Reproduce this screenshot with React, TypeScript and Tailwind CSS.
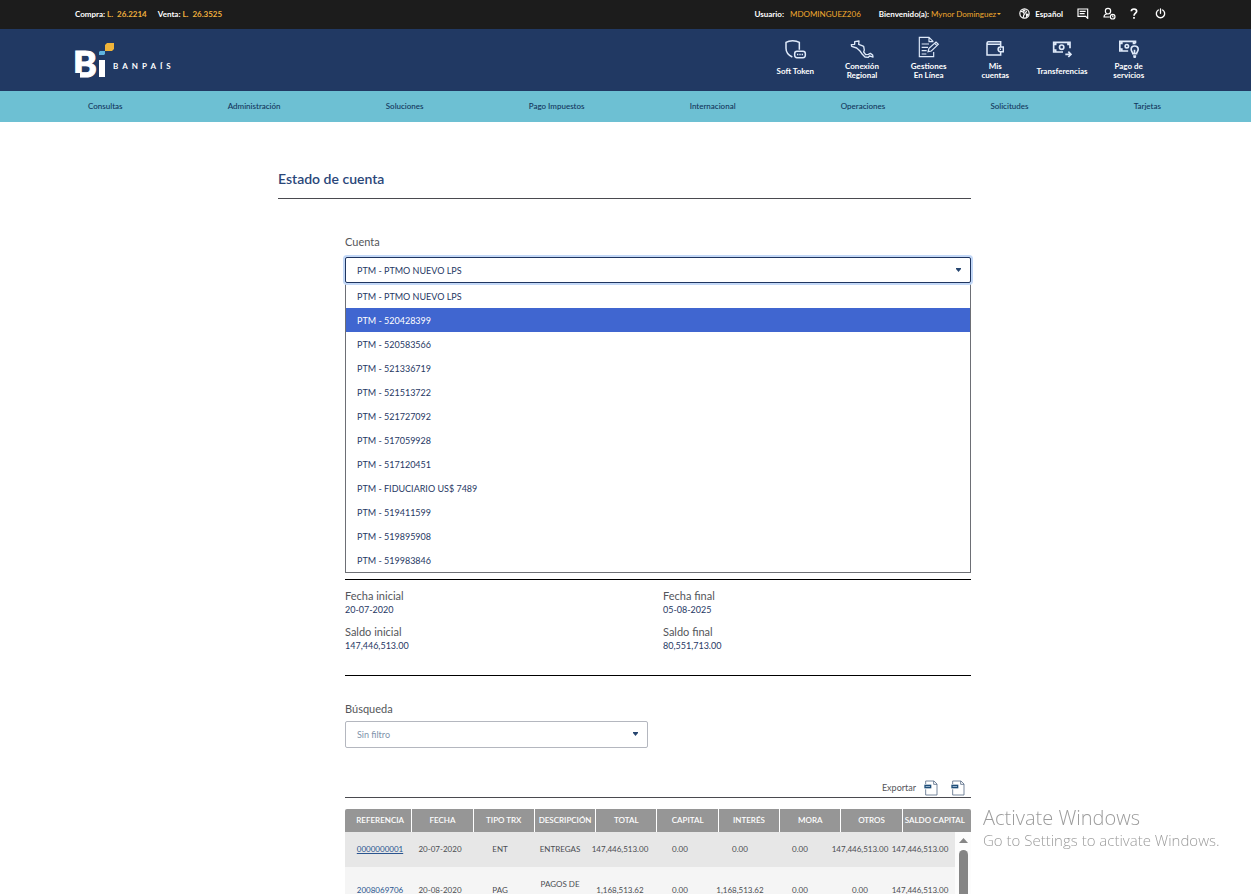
import { useState, type ReactNode } from "react";

const accounts = [
  "PTM - PTMO NUEVO LPS",
  "PTM - 520428399",
  "PTM - 520583566",
  "PTM - 521336719",
  "PTM - 521513722",
  "PTM - 521727092",
  "PTM - 517059928",
  "PTM - 517120451",
  "PTM - FIDUCIARIO US$ 7489",
  "PTM - 519411599",
  "PTM - 519895908",
  "PTM - 519983846",
];

const menu = [
  "Consultas",
  "Administración",
  "Soluciones",
  "Pago Impuestos",
  "Internacional",
  "Operaciones",
  "Solicitudes",
  "Tarjetas",
];

const summary = [
  { label: "Fecha inicial", value: "20-07-2020" },
  { label: "Fecha final", value: "05-08-2025" },
  { label: "Saldo inicial", value: "147,446,513.00" },
  { label: "Saldo final", value: "80,551,713.00" },
];

const columns = [
  "REFERENCIA",
  "FECHA",
  "TIPO TRX",
  "DESCRIPCIÓN",
  "TOTAL",
  "CAPITAL",
  "INTERÉS",
  "MORA",
  "OTROS",
  "SALDO CAPITAL",
];

const rows = [
  ["0000000001", "20-07-2020", "ENT", "ENTREGAS", "147,446,513.00", "0.00", "0.00", "0.00", "147,446,513.00", "147,446,513.00"],
  ["2008069706", "20-08-2020", "PAG", "PAGOS DE", "1,168,513.62", "0.00", "1,168,513.62", "0.00", "0.00", "147,446,513.00"],
];

const fieldLabel = "block text-[11px] leading-4 text-[#54565a]";

export default function App() {
  return (
    <div className="h-screen overflow-hidden bg-white font-['Lato',sans-serif] text-[#1f3864]">
      <TopBar />
      <Header />
      <nav className="bg-[#6dc0d3]">
        <ul className="mx-auto flex h-[31px] max-w-[1101px] items-center justify-between pb-px pl-[13px] pr-[15px] text-[8px] font-medium text-[#12355b]">
          {menu.map((item) => (
            <li key={item}>
              <a href="#">{item}</a>
            </li>
          ))}
        </ul>
      </nav>
      <main className="mx-auto max-w-[695px] pr-[2px] pt-[47px]">
        <h1 className="border-b border-[#4a4a4f] pb-[9px] text-[14px] font-semibold leading-5 text-[#2a4679]">Estado de cuenta</h1>
        <div className="ml-[67px] pt-[35px]">
          <AccountSelect />
          <dl className="mt-[6px] grid grid-cols-2 gap-x-[10px] gap-y-2 border-y border-black pb-[22px] pt-[9px] leading-[14px]">
            {summary.map((s) => (
              <div key={s.label}>
                <dt className="text-[11px] text-[#54565a]">{s.label}</dt>
                <dd className="text-[9px]">{s.value}</dd>
              </div>
            ))}
          </dl>
          <div className="mt-[25px]">
            <label htmlFor="filter" className={fieldLabel}>
              Búsqueda
            </label>
            <div className="relative mt-1 w-[303px]">
              <select
                id="filter"
                className="block h-[27px] w-full appearance-none rounded-xs border border-[#b4b7bf] bg-white pl-[11px] text-[9px] text-[#8093ab]"
              >
                <option>Sin filtro</option>
              </select>
              <Caret />
            </div>
          </div>
          <div className="mt-[30px] flex h-5 items-center justify-end border-b border-[#4a4a4f] pr-[6px]">
            <span className="mr-2 text-[9px] text-[#54565a]">Exportar</span>
            <button type="button" aria-label="Exportar a Excel" className="mr-[13px]">
              <FileIcon />
            </button>
            <button type="button" aria-label="Exportar a PDF">
              <FileIcon />
            </button>
          </div>
          <Movements />
        </div>
      </main>
      <div className="pointer-events-none fixed bottom-11 right-8 w-[236px] whitespace-nowrap font-['Open_Sans',sans-serif] font-light text-[#9c9c9c]">
        <p className="text-[20px] leading-6">Activate Windows</p>
        <p className="text-[15px] leading-5">Go to Settings to activate Windows.</p>
      </div>
    </div>
  );
}

function TopBar() {
  return (
    <div className="bg-[#1c1c1c] text-[8px] text-white">
      <div className="mx-auto flex h-[29px] max-w-[1101px] items-center pb-[2px]">
        <p className="font-bold">
          Compra: <span className="text-[#f0b03c]">L.&nbsp; 26.2214</span>
        </p>
        <p className="ml-[11px] font-bold">
          Venta: <span className="text-[#f0b03c]">L.&nbsp; 26.3525</span>
        </p>
        <p className="ml-auto font-bold">Usuario:</p>
        <p className="ml-[6px] text-[#f0a92e]">MDOMINGUEZ206</p>
        <p className="ml-[18px] font-bold">Bienvenido(a):</p>
        <button type="button" className="ml-[2px] flex items-center gap-px text-[#f0a92e]">
          Mynor Dominguez
          <svg className="h-1 w-1" viewBox="0 0 4 4" fill="currentColor">
            <path d="M0 1h4L2 3z" />
          </svg>
        </button>
        <button type="button" className="ml-[18px] flex items-center gap-[5px] font-bold">
          <svg className="h-[11px] w-[11px]" viewBox="0 0 33 33" fill="none" stroke="currentColor" strokeWidth="3.500">
            <circle cx="16.500" cy="16.500" r="14" />
            <path d="M5 10l6 1 4 5 5-2 3-6M17 17l-3 5-1 7M11 5l4 5 4-5M22 18l5 1-4 6z" />
          </svg>
          Español
        </button>
        <button type="button" aria-label="Mensajes" className="ml-[14px]">
          <svg className="h-[11px] w-3" viewBox="0 0 36 33" fill="none" stroke="currentColor" strokeWidth="3.500">
            <path d="M3 3h29v28l-6-6H3zM8 10h18M8 17h15" />
          </svg>
        </button>
        <button type="button" aria-label="Perfil" className="ml-[14px]">
          <svg className="h-[13px] w-[13px]" viewBox="0 0 39 39" fill="none" stroke="currentColor" strokeWidth="3.500">
            <path d="M15 4c5 0 8 3 8 8s-3 9-8 9-8-4-8-9 3-8 8-8zM11 21c-6 1-8 4-8 9h17" />
            <circle cx="29" cy="29" r="7" />
            <path d="M29 25v5h3" strokeWidth="3" />
          </svg>
        </button>
        <button type="button" aria-label="Ayuda" className="ml-[14px]">
          <svg className="h-[11px] w-2" viewBox="0 0 24 33" fill="none" stroke="currentColor" strokeWidth="5">
            <path d="M4 10c0-5 4-7 8-7s8 3 8 7c0 5-8 6-8 13M12 27v5" />
          </svg>
        </button>
        <button type="button" aria-label="Salir" className="ml-[17px] mr-[10px]">
          <svg className="h-[11px] w-[11px]" viewBox="0 0 33 33" fill="none" stroke="currentColor" strokeWidth="4" strokeLinecap="round">
            <path d="M10 6a12.500 12.500 0 1 0 13 0M16.500 3v13" />
          </svg>
        </button>
      </div>
    </div>
  );
}

function Header() {
  return (
    <header className="bg-[#213963] text-white">
      <div className="mx-auto flex h-[62px] max-w-[1101px] items-start justify-between">
        <a href="#" aria-label="Bi Banpaís" className="mt-[13px] flex">
          <svg className="h-9 w-[38px] overflow-visible" viewBox="0 0 38 36">
            <text x="-2" y="35" fontSize="36" fontWeight="900" fill="#ffffff" stroke="#ffffff" strokeWidth="1">
              B
            </text>
            <path d="M-2 31h7v5h-7z" fill="#213963" />
            <path d="M24 18h6v17h-6z" fill="#ffffff" />
            <path d="M25 9h5v3l-1 1h-5v-3z" fill="#5fb4e0" />
            <path d="M32 1h7v6l-2 2h-7V3z" fill="#f0b43a" />
          </svg>
          <span className="mt-[19px] text-[8px] font-bold leading-[10px] tracking-[4px]">BANPAÍS</span>
        </a>
        <div className="mr-[14px] grid w-[400px] grid-cols-6 pt-[6px] text-center text-[8px] font-bold leading-[9px]">
          <Shortcut label={["Soft Token"]}>
            <svg className="mt-1 h-5 w-[23px]" viewBox="135 115 69 60" fill="none" stroke="#dfeafa" strokeWidth="4.500">
              <path d="M160 169c-14-6-19-15-19-26v-18c6-4 13-5 20-5s14 1 20 5v22" />
              <rect x="167" y="152" width="32" height="19" rx="7" />
              <path d="M174 161.500h4M181 161.500h4M188 161.500h4" strokeWidth="5" />
            </svg>
          </Shortcut>
          <Shortcut label={["Conexión", "Regional"]}>
            <svg className="mt-1 h-5 w-6" viewBox="331 114 72 60" fill="none" stroke="#dfeafa" strokeWidth="4" strokeLinejoin="round">
              <path d="M335 131l10-1v-8l13-2-1 10 8 3 7 3 2 11-2 6 6 8 8-1 6-3 7 5 1 6-6-2-5-1-3 4-10-1-8-8-7-10-10-9-15-5z" />
            </svg>
          </Shortcut>
          <Shortcut label={["Gestiones", "En Línea"]}>
            <svg className="h-[22px] w-[22px]" viewBox="540 106 66 66" fill="none" stroke="#dfeafa" strokeWidth="3.500">
              <path d="M586 123l-13-13h-29v58h43v-14M573 110v13h13M551 130h22M551 140h19M551 150h15M551 160h14M570 153l3-10 21-19 7 7-21 20zM590 128l7 7" />
            </svg>
          </Shortcut>
          <Shortcut label={["Mis", "cuentas"]}>
            <svg className="mt-[2px] h-4 w-[18px]" viewBox="18 119 54 48" fill="none" stroke="#dfeafa" strokeWidth="4.500">
              <path d="M62 139v-15H25c-5 0-5 8 0 8h37M21 127v37h41v-9M70 140v14h-9c-9 0-9-14 0-14zM59 147h4" />
            </svg>
          </Shortcut>
          <Shortcut label={["Transferencias"]}>
            <svg className="mt-1 h-[17px] w-5" viewBox="217 124 60 51" fill="none" stroke="#dfeafa" strokeWidth="5">
              <path d="M250 157h-28v-29h49v18M257 164h15M266 156l8 8-8 8M222 134h6v-6M271 134h-6v-6M222 151h6v6" />
              <circle cx="246" cy="142.500" r="6.500" />
            </svg>
          </Shortcut>
          <Shortcut label={["Pago de", "servicios"]}>
            <svg className="mt-1 h-[18px] w-[22px]" viewBox="417 124 65 54" fill="none" stroke="#dfeafa" strokeWidth="5">
              <path d="M447 157h-25v-29h47v6M422 134h6v-6M469 134h-6v-6M422 151h6v6" />
              <circle cx="443" cy="142.500" r="5" />
              <path d="M461 165c0-5-5-6-5-13 0-6 4-10 10-10s11 4 11 10c0 7-5 8-5 13zM466 153v10M462 172h9M463 176h7" />
            </svg>
          </Shortcut>
        </div>
      </div>
    </header>
  );
}

function Shortcut({ label, children }: { label: string[]; children: ReactNode }) {
  return (
    <a href="#" className="flex flex-col items-center">
      <span className="flex h-6 items-center">{children}</span>
      <span className="mt-[3px] flex h-[18px] flex-col justify-center">
        {label.map((line) => (
          <span key={line}>{line}</span>
        ))}
      </span>
    </a>
  );
}

function AccountSelect() {
  const [selected, setSelected] = useState(accounts[0]);
  const [active, setActive] = useState(1);

  return (
    <div>
      <label htmlFor="account" className={fieldLabel}>
        Cuenta
      </label>
      <div className="relative mt-[7px]">
        <select
          id="account"
          value={selected}
          onChange={(e) => setSelected(e.target.value)}
          className="block h-[26px] w-full appearance-none rounded-xs border border-[#1f3560] bg-white pl-[11px] pt-px text-[9px] ring-2 ring-[#c3d8f7]"
        >
          {accounts.map((a) => (
            <option key={a}>{a}</option>
          ))}
        </select>
        <Caret />
      </div>
      <ul role="listbox" aria-label="Cuentas" className="border border-[#6d6f75] bg-white text-[9px] leading-[22px]">
        {accounts.map((a, i) => (
          <li
            key={a}
            role="option"
            aria-selected={i === active}
            onMouseEnter={() => setActive(i)}
            onClick={() => setSelected(a)}
            className={i === active ? "bg-[#4066d0] pl-[11px] pt-[2px] text-white" : "pl-[11px] pt-[2px]"}
          >
            {a}
          </li>
        ))}
      </ul>
    </div>
  );
}

function Movements() {
  return (
    <div className="relative mt-[11px]">
      <table className="block text-center text-[8px]">
        <thead className="block overflow-hidden rounded-t-xs">
          <tr className="grid h-[23px] grid-cols-[minmax(0,67fr)_repeat(8,minmax(0,61fr))_minmax(0,68fr)] text-white">
            {columns.map((c) => (
              <th
                key={c}
                className="flex items-center justify-center whitespace-nowrap border-r border-white bg-[#969696] pb-px font-semibold first:pl-1 last:border-r-0 last:pr-1"
              >
                {c}
              </th>
            ))}
          </tr>
        </thead>
        <tbody className="mr-4 block text-[#4b4d52]">
          {rows.map((row) => (
            <tr key={row[0]} className="grid h-[35px] grid-cols-10 items-center bg-[#e7e7e7] px-[5px] pb-px even:h-[46px] even:bg-[#f5f5f5]">
              {row.map((cell, i) => (
                <td key={i} className={cell === "PAGOS DE" ? "pb-3" : "whitespace-nowrap"}>
                  {i === 0 ? (
                    <a href="#" className="text-[#2a5590] underline">
                      {cell}
                    </a>
                  ) : (
                    cell
                  )}
                </td>
              ))}
            </tr>
          ))}
        </tbody>
      </table>
      <div className="absolute bottom-0 right-0 top-[23px] flex w-4 flex-col items-center bg-[#fcfcfc] pt-[6px]">
        <svg className="h-[5px] w-[9px]" viewBox="0 0 9 5" fill="#858585">
          <path d="M4.500 0L9 5H0z" />
        </svg>
        <div className="mt-[7px] w-[9px] flex-1 rounded-t-full bg-[#858585]" />
      </div>
    </div>
  );
}

function Caret() {
  return (
    <svg className="pointer-events-none absolute right-[10px] top-[11px] h-1 w-[5px]" viewBox="0 0 5 4" fill="#26456f">
      <path d="M0 0h5v1L2.500 4 0 1z" />
    </svg>
  );
}

function FileIcon() {
  return (
    <svg className="h-4 w-[14px]" viewBox="0 0 42 48" fill="none" stroke="#5b7089" strokeWidth="2.500">
      <path d="M5 12V3h25l9 9v33H5V28M29 3v10h10" />
      <path d="M1 14h21v11H1z" fill="#1f4e79" stroke="none" />
      <path d="M5 19.500h13" stroke="#a9c3dc" />
    </svg>
  );
}
